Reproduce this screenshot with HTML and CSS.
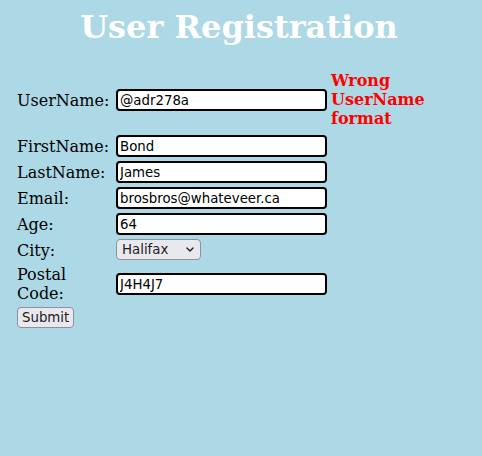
FILE: index.html
```html
<!DOCTYPE html>
<html>
<head>
<meta charset="utf-8">
<link rel="stylesheet" href="styles.css">
</head>
<body>
<h1 class="title">User Registration</h1>
<form class="form">
  <label class="lbl">UserName:</label>
  <input class="field" type="text" value="@adr278a">
  <span class="err">Wrong UserName format</span>

  <label class="lbl">FirstName:</label>
  <input class="field" type="text" value="Bond">
  <span></span>

  <label class="lbl">LastName:</label>
  <input class="field" type="text" value="James">
  <span></span>

  <label class="lbl">Email:</label>
  <input class="field" type="text" value="brosbros@whateveer.ca">
  <span></span>

  <label class="lbl">Age:</label>
  <input class="field" type="text" value="64">
  <span></span>

  <label class="lbl">City:</label>
  <div class="selcell">
    <div class="selwrap">
      <select class="sel"><option>Halifax</option><option>Toronto</option></select>
      <svg class="chev" width="8" height="5" viewBox="0 0 8 5"><path d="M1 1 L4 4 L7 1" fill="none" stroke="#1c1b22" stroke-width="1.4" stroke-linecap="round" stroke-linejoin="round"/></svg>
    </div>
  </div>
  <span></span>

  <label class="lbl">Postal Code:</label>
  <input class="field" type="text" value="J4H4J7">
  <span></span>

  <div class="btncell"><button class="btn" type="button">Submit</button></div>
</form>
</body>
</html>
```
FILE: styles.css
```css
html, body {
  background: #add8e6;
}
body {
  margin: 8px;
  font-family: "DejaVu Serif", serif;
  font-size: 16px;
}
.title {
  margin: 0;
  padding-right: 4px;
  text-align: center;
  color: #fff;
  font-size: 32px;
  font-weight: bold;
  font-family: "DejaVu Serif", serif;
}
.form {
  display: grid;
  grid-template-columns: 95px 211px 140px;
  grid-template-rows: 62px;
  column-gap: 4px;
  row-gap: 4px;
  align-items: center;
  padding: 23px 0 0 9px;
}
.lbl {
  line-height: 19px;
}
.field {
  box-sizing: border-box;
  width: 211px;
  height: 22px;
  margin: 0;
  border: 2px solid #000;
  border-radius: 4px;
  padding: 1px 2px;
  font-family: "DejaVu Sans", sans-serif;
  font-size: 13.33px;
  background: #fff;
  color: #000;
  outline: none;
}
.err {
  align-self: start;
  color: red;
  font-weight: bold;
  line-height: 19px;
  padding-top: 2px;
}
.selcell {
  display: flex;
  height: 22px;
  align-items: flex-start;
}
.selwrap {
  position: relative;
  display: flex;
}
.sel {
  -webkit-appearance: none;
  appearance: none;
  box-sizing: border-box;
  font-family: "DejaVu Sans", sans-serif;
  font-size: 13.33px;
  color: #1c1b22;
  width: 85px;
  height: 21px;
  margin: 0;
  padding: 0 4px 0 5px;
  background: #e9e9ed;
  border: 1px solid #8f8f9d;
  border-radius: 4px;
  outline: none;
}
.chev {
  position: absolute;
  right: 7px;
  top: 8px;
  pointer-events: none;
}
.btncell {
  grid-column: 1 / 3;
}
.btn {
  box-sizing: border-box;
  font-family: "DejaVu Sans", sans-serif;
  font-size: 13.33px;
  color: #1c1b22;
  height: 21px;
  margin: 0;
  padding: 0 4px;
  background: #e9e9ed;
  border: 1px solid #8f8f9d;
  border-radius: 4px;
}
```
